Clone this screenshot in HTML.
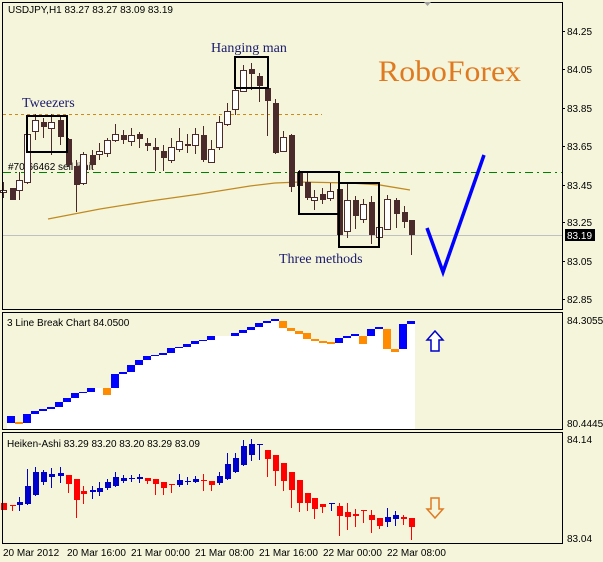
<!DOCTYPE html>
<html><head><meta charset="utf-8"><style>
html,body{margin:0;padding:0;background:#f5f5dc;width:603px;height:562px;overflow:hidden}
svg{display:block;font-family:"Liberation Sans",sans-serif}
</style></head><body>
<svg id="s" width="603" height="562" xmlns="http://www.w3.org/2000/svg">
<rect width="603" height="562" fill="#f5f5dc"/>
<g id="g"></g>
<rect x="2.5" y="2.5" width="560" height="307" fill="none" stroke="#000"/>
<rect x="2.5" y="312.5" width="560" height="117" fill="none" stroke="#000"/>
<rect x="2.5" y="432.5" width="560" height="111" fill="none" stroke="#000"/>
<polygon points="424,2 431,2 427.5,6" fill="#a0a0a0"/>
<g font-size="10" fill="#000">
<text x="8" y="13">USDJPY,H1  83.27 83.27 83.09 83.19</text>
<text x="567" y="35">84.25</text><text x="567" y="73">84.05</text><text x="567" y="112">83.85</text>
<text x="567" y="150">83.65</text><text x="567" y="189">83.45</text><text x="567" y="226">83.25</text>
<text x="567" y="265">83.05</text><text x="567" y="303">82.85</text>
<rect x="565" y="229" width="30" height="12" fill="#000"/>
<text x="567" y="239" fill="#fff">83.19</text>
<text x="567" y="324">84.3055</text><text x="567" y="427">80.4445</text>
<text x="567" y="443">84.14</text><text x="567" y="542">83.04</text>
<text x="7" y="326">3 Line Break Chart 84.0500</text>
<text x="7" y="447">Heiken-Ashi 83.29 83.20 83.20 83.29 83.09</text>
<text x="3" y="556">20 Mar 2012</text><text x="67" y="556">20 Mar 16:00</text>
<text x="131" y="556">21 Mar 00:00</text><text x="195" y="556">21 Mar 08:00</text>
<text x="259" y="556">21 Mar 16:00</text><text x="323" y="556">22 Mar 00:00</text>
<text x="387" y="556">22 Mar 08:00</text>
</g>
<g stroke="#000"><line x1="562" y1="31.5" x2="565" y2="31.5"/><line x1="562" y1="69.5" x2="565" y2="69.5"/><line x1="562" y1="108.5" x2="565" y2="108.5"/><line x1="562" y1="146.5" x2="565" y2="146.5"/><line x1="562" y1="185.5" x2="565" y2="185.5"/><line x1="562" y1="222.5" x2="565" y2="222.5"/><line x1="562" y1="261.5" x2="565" y2="261.5"/><line x1="562" y1="299.5" x2="565" y2="299.5"/></g>
</svg>
<script>
var g=document.getElementById('g'),h='';
h+='<line x1="3" y1="235.5" x2="562" y2="235.5" stroke="#c0c0c0"/>';
h+='<line x1="3" y1="114.5" x2="322" y2="114.5" stroke="#d08a10" stroke-dasharray="3,3"/>';
h+='<line x1="3" y1="172.5" x2="562" y2="172.5" stroke="#008000" stroke-dasharray="8,4,2,4"/>';
h+='<text x="8" y="170" font-size="10" fill="#000">#70 66462 sell limit</text>';
h+='<polyline points="48,219 100,209 150,201 200,194 250,186 275,183 300,182 350,183 380,185 410,190" fill="none" stroke="#c08a20" stroke-width="1.3"/>';
var C=[[3,190,192,182,198,1],[12,188,200,188,200,0],[19,180,190,172,200,1],[27,134,182,130,184,1],[35,120,131,114,140,1],[43,122,127,118,138,0],[51,122,128,114,155,1],[60,120,137,115,145,0],[68,139,165,138,167,0],[76,166,185,160,212,0],[83,154,183,152,185,1],[92,155,165,150,170,0],[99,151,154,143,160,1],[107,140,153,138,157,1],[115,134,140,124,142,1],[123,135,140,130,144,0],[131,135,141,128,146,1],[139,134,139,132,148,0],[147,143,146,138,151,0],[155,147,150,138,171,0],[163,151,158,145,171,0],[171,147,160,138,163,1],[179,141,149,128,152,1],[187,144,146,134,153,0],[195,134,145,128,154,1],[203,135,160,126,162,0],[211,149,162,140,163,1],[219,122,147,116,150,1],[227,111,124,103,126,1],[235,90,109,88,115,1],[243,70,91,65,92,1],[251,69,74,63,90,0],[259,76,86,73,102,0],[267,88,101,85,136,0],[275,103,153,99,154,0],[283,137,151,131,152,1],[291,135,187,134,192,0],[299,172,186,170,190,0],[307,182,198,172,200,0],[314,197,200,190,210,1],[322,194,200,188,204,0],[330,191,198,183,201,1],[339,189,235,183,236,0],[347,200,231,183,238,1],[355,200,216,196,229,0],[363,204,219,199,223,1],[371,202,235,196,244,0],[379,227,237,225,240,1],[387,199,229,195,229,1],[396,200,214,198,228,0],[404,212,222,206,228,0],[411,220,235,220,255,0]];
C.forEach(function(c){var x=c[0];h+='<line x1="'+(x+.5)+'" y1="'+c[3]+'" x2="'+(x+.5)+'" y2="'+c[4]+'" stroke="#4a2a2a"/>';
if(c[5])h+='<rect x="'+(x-2.5)+'" y="'+(c[1]+.5)+'" width="6" height="'+Math.max(1,c[2]-c[1])+'" fill="#fff" stroke="#4a2a2a"/>';
else h+='<rect x="'+(x-2)+'" y="'+c[1]+'" width="6" height="'+Math.max(1,c[2]-c[1])+'" fill="#4a2a2a"/>';});
h+='<g fill="none" stroke="#000" stroke-width="2"><rect x="27" y="116" width="40" height="36"/><rect x="235" y="57" width="33" height="31"/><rect x="299" y="172" width="40" height="42"/><rect x="339" y="183" width="40" height="64"/></g>';
h+='<g font-family="Liberation Serif,serif" font-size="14" fill="#1a1a6e"><text x="211" y="52">Hanging man</text><text x="22" y="107">Tweezers</text><text x="279" y="263">Three methods</text></g>';
h+='<text x="378" y="81" font-family="Liberation Serif,serif" font-size="30" fill="#e07a20" textLength="143" lengthAdjust="spacingAndGlyphs">RoboForex</text>';
h+='<polyline points="427,228 443,272 484,155" fill="none" stroke="#0000ff" stroke-width="3.5"/>';
var B=[[7,416,15,423,'b'],[15,422,23,424,'o'],[23,414,31,423,'b'],[31,411,39,414,'b'],[39,409,47,411,'b'],[47,407,55,409,'b'],[55,402,63,407,'b'],[63,398,71,402,'b'],[71,393,79,398,'b'],[79,392,87,393,'b'],[87,388,95,392,'b'],[95,388,103,389,'w'],[103,388,111,395,'o'],[111,374,119,388,'b'],[119,372,127,374,'b'],[127,365,135,372,'b'],[135,360,143,365,'b'],[143,356,151,360,'b'],[151,355,159,356,'b'],[159,353,167,355,'b'],[167,348,175,353,'b'],[175,347,183,348,'b'],[183,344,191,347,'b'],[191,341,199,344,'b'],[199,340,207,341,'b'],[207,336,215,340,'b'],[215,336,231,337,'w'],[231,333,239,336,'b'],[239,330,247,333,'b'],[247,327,255,330,'b'],[255,323,263,327,'b'],[263,321,271,323,'b'],[271,319,279,321,'b'],[279,321,287,328,'o'],[287,328,295,331,'o'],[295,331,303,334,'o'],[303,333,311,339,'o'],[311,339,319,341,'o'],[319,341,327,343,'o'],[327,342,335,344,'o'],[335,338,343,343,'b'],[343,336,351,338,'b'],[351,334,359,336,'b'],[359,336,367,344,'o'],[367,329,375,336,'b'],[375,327,383,329,'b'],[383,329,391,349,'o'],[391,349,399,352,'o'],[399,324,407,349,'b'],[407,321,415,324,'b']];
B.forEach(function(b){h+='<rect x="'+b[0]+'" y="'+b[1]+'" width="'+(b[2]-b[0])+'" height="'+(429-b[1])+'" fill="#fff"/>';});
B.forEach(function(b){if(b[4]=='w')return;h+='<rect x="'+b[0]+'" y="'+b[1]+'" width="'+(b[2]-b[0])+'" height="'+(b[3]-b[1])+'" fill="'+(b[4]=='b'?'#0000ff':'#ff8c00')+'"/>';});
h+='<path d="M435,331 L443,340 L439,340 L439,351 L431,351 L431,340 L427,340 Z" fill="#fff" stroke="#0000cc" stroke-width="1.5"/>';
h+='<path d="M435,518 L443,509 L439,509 L439,498 L431,498 L431,509 L427,509 Z" fill="none" stroke="#e07a20" stroke-width="1.5"/>';
var H=[[3,503,510,503,510,0],[12,505,506,505,511,0],[19,502,505,497,511,1],[27,486,504,469,505,1],[35,472,495,467,496,1],[43,472,482,470,485,1],[51,474,477,468,488,1],[60,473,476,467,483,1],[68,475,484,475,493,0],[76,479,500,479,518,0],[83,491,494,486,504,0],[92,490,492,486,499,1],[99,488,492,482,496,1],[107,482,488,479,490,1],[115,477,486,472,487,1],[123,478,481,475,483,1],[131,478,479,475,482,1],[139,477,479,474,483,1],[147,478,481,478,484,0],[155,479,484,479,495,0],[163,482,488,482,495,0],[171,484,485,484,493,0],[179,480,485,474,487,1],[187,481,482,477,485,1],[195,479,482,476,483,1],[203,480,481,474,491,0],[211,481,485,481,491,0],[219,476,483,472,485,1],[227,464,479,453,480,1],[235,458,472,453,473,1],[243,446,465,440,466,1],[251,444,455,439,461,1],[259,444,445,444,460,1],[267,450,459,450,477,0],[275,455,471,455,486,0],[283,463,481,463,491,0],[291,472,490,472,508,0],[299,480,503,480,512,0],[307,493,503,493,511,0],[314,498,509,498,519,0],[322,504,507,504,513,0],[331,503,504,503,511,1],[339,506,516,503,536,0],[347,512,517,503,530,0],[355,514,516,509,527,0],[363,510,511,510,523,0],[371,515,520,510,533,0],[379,518,526,518,529,0],[387,517,522,508,527,1],[395,515,519,511,526,1],[403,517,519,515,525,0],[411,518,527,518,540,0]];
H.forEach(function(c){var col=c[5]?'#0000cc':'#ff0000',x=c[0];h+='<line x1="'+(x+.5)+'" y1="'+c[3]+'" x2="'+(x+.5)+'" y2="'+c[4]+'" stroke="'+col+'"/><rect x="'+(x-2)+'" y="'+c[1]+'" width="6" height="'+Math.max(1,c[2]-c[1])+'" fill="'+col+'"/>';});
g.innerHTML=h;
</script>
</body></html>
